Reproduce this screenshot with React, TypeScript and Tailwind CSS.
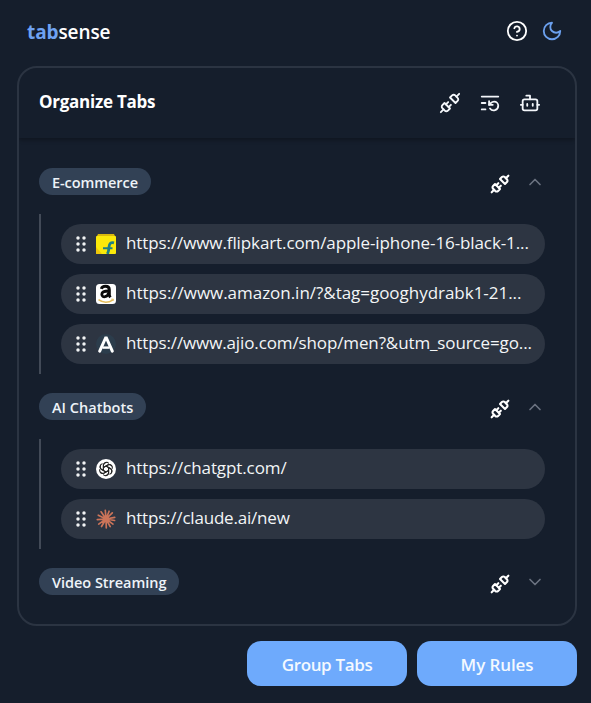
import type { ReactNode } from 'react';
import { Unplug, ListRestart, Bot, ChevronUp, ChevronDown, CircleHelp } from 'lucide-react';

function FlipkartIcon() {
  return (
    <svg width="20" height="20" viewBox="0 0 20 20">
      <path d="M2 0h16l1.5 3h-19z" fill="#d9b90c" />
      <rect x="0" y="2" width="20" height="18" rx="1" fill="#fbe90a" />
      <path d="M0 13l6 7H1a1 1 0 0 1-1-1z" fill="#efc70a" />
      <path d="M18 8.800c-3.300-.8-4.600.6-4.900 3.800-.3 3.200-.6 5.200-1.700 7.400" fill="none" stroke="#1c7f86" strokeWidth="2.800" />
      <path d="M7 14.200h9.500" stroke="#1c7f86" strokeWidth="2" />
    </svg>
  );
}

function AmazonIcon() {
  return (
    <svg width="20" height="20" viewBox="0 0 20 20">
      <rect width="20" height="20" rx="3.500" fill="#fff" />
      <path d="M5.400 4.900C5.900 2.900 7.600 2.300 9.600 2.300c2.600 0 3.700 1.300 3.700 3.500v5c0 1.200.4 1.600 1.100 2.500" fill="none" stroke="#0b0b0b" strokeWidth="3" />
      <path d="M12.600 7C7.800 7 5.800 8.100 5.800 10.300c0 3.900 6.200 3 6.700-1.300" fill="none" stroke="#0b0b0b" strokeWidth="2.800" />
      <path d="M2.500 15.600c4.500 3.300 10 3.200 14.500.2" fill="none" stroke="#e5bd5a" strokeWidth="1.500" />
      <path d="M15.200 15.200h2.300l-.5 1.800" fill="none" stroke="#e5bd5a" strokeWidth=".9" />
    </svg>
  );
}

function AjioIcon() {
  return (
    <svg width="20" height="20" viewBox="0 0 20 20">
      <circle cx="10" cy="10" r="10" fill="#2c3d4c" />
      <path d="M3.700 17.200 L10 3 L16.300 17.200" fill="none" stroke="#fff" strokeWidth="3" strokeLinejoin="bevel" strokeLinecap="round" />
      <path d="M6.500 13.600h7" stroke="#fff" strokeWidth="2.400" />
    </svg>
  );
}

function ChatGptIcon() {
  return (
    <svg width="20" height="20" viewBox="0 0 20 20">
      <circle cx="10" cy="10" r="10" fill="#fff" />
      <g transform="translate(10 10) scale(1.08) translate(-10 -10)" fill="none" stroke="#222" strokeWidth="1" strokeLinejoin="round">
        {[0, 60, 120, 180, 240, 300].map((angle) => (
          <path key={angle} transform={`rotate(${angle} 10 10)`} d="M7.600 11.400V6.500a2.800 2.800 0 0 1 5-1.600M7.600 8.600l4-2.300a2.800 2.800 0 0 1 3.900 1.200" />
        ))}
      </g>
    </svg>
  );
}

function ClaudeIcon() {
  return (
    <svg width="20" height="20" viewBox="0 0 20 20" stroke="#cc7459" strokeWidth="1.700" strokeLinecap="round">
      <path d="M10 10 9.300 1.300M10 10l3.100-7.800M10 10l6.300-6.200M10 10l8.700-1.700M10 10l8.600 1.500M10 10l7 5.100M10 10l4.200 7.600M10 10l.3 8.900M10 10l-4.500 7.500M10 10l-7.300 5.100M10 10l-8.700.7M10 10 2.300 6.200M10 10 5.100 2.800" />
    </svg>
  );
}

function MoonIcon() {
  return (
    <svg width="22" height="22" viewBox="0 0 24 24" fill="none" stroke="#6ba0ee" strokeWidth="2" strokeLinecap="round" strokeLinejoin="round">
      <path d="M12 3a6 6 0 0 0 9 9 9 9 0 1 1-9-9Z" />
    </svg>
  );
}

function DragDots() {
  return (
    <svg width="10" height="16" viewBox="0 0 10 16" fill="#f1f3f5" className="shrink-0">
      {[2, 8, 14].map((y) => (
        <g key={y}>
          <circle cx="2" cy={y} r="1.750" />
          <circle cx="8" cy={y} r="1.750" />
        </g>
      ))}
    </svg>
  );
}

function TabRow({ icon, children, tracking }: { icon: ReactNode; children: string; tracking: string }) {
  return (
    <div className="flex h-10 items-center rounded-full bg-[#2d3542] pl-[15px]">
      <DragDots />
      <span className="ml-[10px] h-5 w-5 shrink-0">{icon}</span>
      <span className={`ml-[10px] whitespace-nowrap text-[17px] leading-6 pb-[2px] text-[#f3f5f7] ${tracking}`}>{children}</span>
    </div>
  );
}

function Group({ name, open, tracking, children }: { name: string; open: boolean; tracking: string; children?: ReactNode }) {
  const Chevron = open ? ChevronUp : ChevronDown;
  return (
    <section>
      <div className="flex h-[27px] items-center justify-between">
        <span className={`flex h-[27px] items-center rounded-full bg-[#324155] px-[13px] pt-[2px] text-[14.5px] font-semibold text-[#eef3f8] ${tracking}`}>{name}</span>
        <div className="flex items-center gap-[15px] pt-[5px]">
          <Unplug size={20} strokeWidth={2.5} color="#fff" />
          <Chevron size={20} strokeWidth={2} color="#6b7280" className="-mt-[4px]" />
        </div>
      </div>
      {open && (
        <div className="mt-[19px] flex flex-col gap-[10px] border-l-2 border-[#424a57] py-[10px] pl-5">{children}</div>
      )}
    </section>
  );
}

export default function App() {
  return (
    <div className="flex h-[703px] w-[591px] flex-col bg-[#151e2c] font-['Open_Sans','Noto_Sans',sans-serif]">
      <header className="flex h-[66px] items-center justify-between pr-[28px] pb-[3px] pl-[27px]">
        <h1 className="pt-[2px] text-[19px] font-bold tracking-[-0.1px] text-white">
          <span className="text-[#6ea2f2]">tab</span>
          <span className="font-semibold">sense</span>
        </h1>
        <div className="flex items-center gap-[13px] pb-px">
          <CircleHelp size={22} color="#fff" />
          <MoonIcon />
        </div>
      </header>
      <main className="mr-[14px] ml-[17px] h-[560px] overflow-hidden rounded-[20px] border-2 border-[#2b3442]">
        <div className="flex h-[70px] items-center justify-between pr-[34px] pl-5 shadow-[0_2px_4px_rgba(0,0,0,0.3)]">
          <h2 className="pb-[2px] text-[17px] font-bold tracking-[-0.25px] text-white">Organize Tabs</h2>
          <div className="flex items-center gap-[18px] pb-px text-[#f3f6fa]">
            <Unplug size={22} />
            <ListRestart size={22} />
            <Bot size={22} />
          </div>
        </div>
        <div className="flex flex-col gap-[19px] pt-[30px] pr-[30px] pl-5">
          <Group name="E-commerce" open tracking="tracking-[-0.07px]">
            <TabRow icon={<FlipkartIcon />} tracking="tracking-[-0.1px]">https://www.flipkart.com/apple-iphone-16-black-1...</TabRow>
            <TabRow icon={<AmazonIcon />} tracking="tracking-[-0.03px]">https://www.amazon.in/?&tag=googhydrabk1-21...</TabRow>
            <TabRow icon={<AjioIcon />} tracking="tracking-[-0.12px]">https://www.ajio.com/shop/men?&utm_source=go...</TabRow>
          </Group>
          <Group name="AI Chatbots" open tracking="tracking-[0.03px]">
            <TabRow icon={<ChatGptIcon />} tracking="tracking-[-0.1px]">https://chatgpt.com/</TabRow>
            <TabRow icon={<ClaudeIcon />} tracking="tracking-[-0.2px]">https://claude.ai/new</TabRow>
          </Group>
          <Group name="Video Streaming" open={false} tracking="tracking-[-0.03px]" />
        </div>
      </main>
      <footer className="mt-[15px] flex justify-end gap-[10px] pr-[14px]">
        <button className="h-[45px] w-40 rounded-[14px] bg-[#6eaafc] pt-[2px] text-[17px] font-semibold tracking-[-0.35px] text-[#f4f9ff]">Group Tabs</button>
        <button className="h-[45px] w-40 rounded-[14px] bg-[#6eaafc] pt-[2px] text-[17px] font-semibold tracking-[-0.1px] text-[#f4f9ff]">My Rules</button>
      </footer>
    </div>
  );
}
